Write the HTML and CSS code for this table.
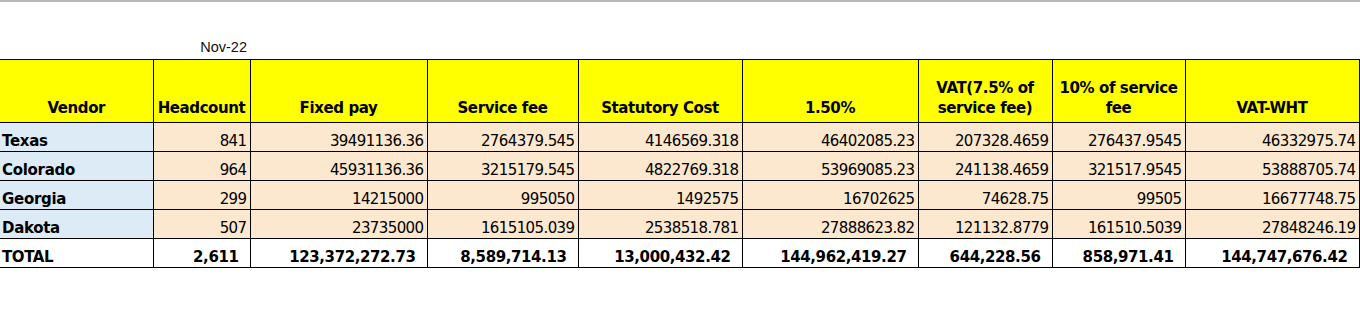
FILE: index.html
```html
<!DOCTYPE html>
<html>
<head>
<meta charset="utf-8">
<link rel="stylesheet" href="styles.css">
</head>
<body>
<div class="gridtop"></div>
<table class="report">
  <colgroup>
    <col class="c-vendor">
    <col class="c-head">
    <col class="c-fixed">
    <col class="c-fee">
    <col class="c-stat">
    <col class="c-pct">
    <col class="c-vat">
    <col class="c-ten">
    <col class="c-wht">
  </colgroup>
  <tbody>
    <tr class="date-row">
      <td></td>
      <td class="date">Nov-22</td>
      <td></td><td></td><td></td><td></td><td></td><td></td><td></td>
    </tr>
    <tr class="head">
      <th>Vendor</th>
      <th>Headcount</th>
      <th>Fixed pay</th>
      <th>Service fee</th>
      <th>Statutory Cost</th>
      <th>1.50%</th>
      <th>VAT(7.5% of<br>service fee)</th>
      <th>10% of service<br>fee</th>
      <th>VAT-WHT</th>
    </tr>
    <tr class="data">
      <td class="name">Texas</td>
      <td>841</td>
      <td>39491136.36</td>
      <td>2764379.545</td>
      <td>4146569.318</td>
      <td>46402085.23</td>
      <td>207328.4659</td>
      <td>276437.9545</td>
      <td>46332975.74</td>
    </tr>
    <tr class="data">
      <td class="name">Colorado</td>
      <td>964</td>
      <td>45931136.36</td>
      <td>3215179.545</td>
      <td>4822769.318</td>
      <td>53969085.23</td>
      <td>241138.4659</td>
      <td>321517.9545</td>
      <td>53888705.74</td>
    </tr>
    <tr class="data">
      <td class="name">Georgia</td>
      <td>299</td>
      <td>14215000</td>
      <td>995050</td>
      <td>1492575</td>
      <td>16702625</td>
      <td>74628.75</td>
      <td>99505</td>
      <td>16677748.75</td>
    </tr>
    <tr class="data">
      <td class="name">Dakota</td>
      <td>507</td>
      <td>23735000</td>
      <td>1615105.039</td>
      <td>2538518.781</td>
      <td>27888623.82</td>
      <td>121132.8779</td>
      <td>161510.5039</td>
      <td>27848246.19</td>
    </tr>
    <tr class="total">
      <td class="name">TOTAL</td>
      <td>2,611</td>
      <td>123,372,272.73</td>
      <td>8,589,714.13</td>
      <td>13,000,432.42</td>
      <td>144,962,419.27</td>
      <td>644,228.56</td>
      <td>858,971.41</td>
      <td>144,747,676.42</td>
    </tr>
  </tbody>
</table>
</body>
</html>
```

FILE: styles.css
```css
html, body {
  margin: 0;
  padding: 0;
  background: #ffffff;
}

body {
  font-family: "DejaVu Sans", "Liberation Sans", sans-serif;
  color: #000;
}

.gridtop {
  height: 2px;
  background: #b8b8b8;
}

.report {
  border-collapse: collapse;
  table-layout: fixed;
  width: 1359px;
  margin-top: 29px;
}

.c-vendor { width: 153px; }
.c-head { width: 97px; }
.c-fixed { width: 177px; }
.c-fee { width: 151px; }
.c-stat { width: 164px; }
.c-pct { width: 176px; }
.c-vat { width: 134px; }
.c-ten { width: 133px; }
.c-wht { width: 174px; }

.report td,
.report th {
  padding: 0;
  white-space: nowrap;
  overflow: hidden;
}

/* date row */
.date-row td {
  height: 28px;
  border: none;
  vertical-align: bottom;
}

.date-row td.date {
  height: 24px;
  font-family: "Liberation Sans", Arial, sans-serif;
  font-size: 14.5px;
  line-height: 16px;
  text-align: right;
  padding: 0 3px 4px 0;
  color: #111;
}

/* header */
.head th {
  background: #ffff00;
  border: 1px solid #000;
  height: 58px;
  font-size: 15px;
  letter-spacing: -0.4px;
  font-weight: bold;
  line-height: 20px;
  text-align: center;
  vertical-align: bottom;
  padding-bottom: 4px;
}

.head th:first-child {
  border-left: none;
}

/* data rows */
.data td {
  background: #fce8cf;
  border: 1px solid #000;
  height: 27px;
  font-size: 15px;
  letter-spacing: -0.6px;
  line-height: 18px;
  text-align: right;
  vertical-align: bottom;
  padding: 0 3px 1px 2px;
}

.data td.name {
  background: #ddebf7;
  border-left: none;
  font-weight: bold;
  text-align: left;
  letter-spacing: -0.3px;
}

/* totals */
.total td {
  background: #ffffff;
  border: 1px solid #000;
  height: 27px;
  font-size: 15px;
  font-weight: bold;
  letter-spacing: -0.4px;
  line-height: 18px;
  text-align: right;
  vertical-align: bottom;
  padding: 0 11px 1px 2px;
}

.total td.name {
  border-left: none;
  text-align: left;
}
```
